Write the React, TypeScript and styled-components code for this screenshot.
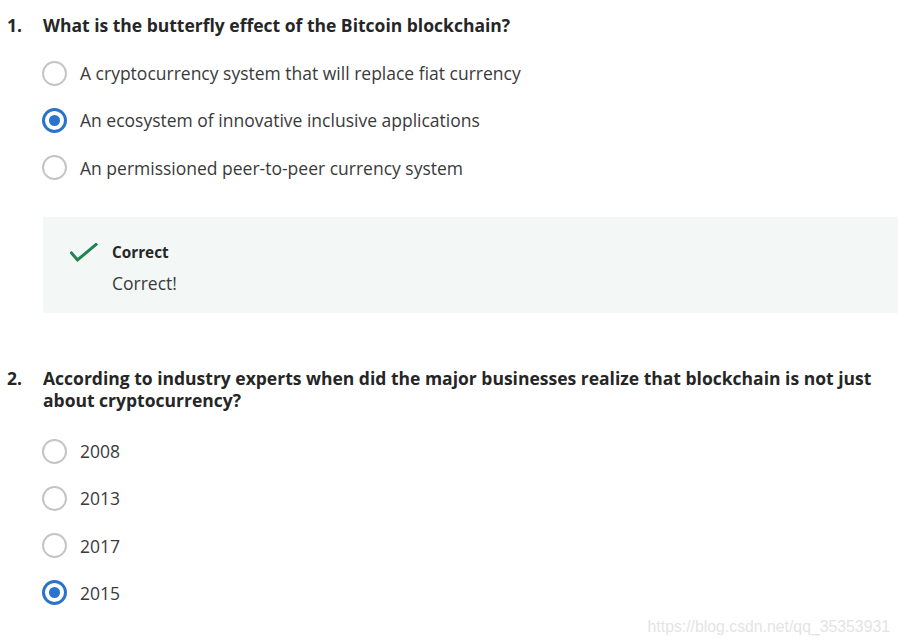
import styled, { createGlobalStyle } from 'styled-components';

const GlobalStyle = createGlobalStyle`
  body {
    margin: 0;
    background: #ffffff;
    font-family: 'Open Sans', 'Noto Sans', sans-serif;
    color: #1f1f1f;
  }
`;

const S_Page = styled.main`
  position: relative;
  width: 898px;
  height: 644px;
  overflow: hidden;
  padding: 14px 0 0 7px;
  box-sizing: border-box;
`;

const S_Question = styled.section<{ $gap: number }>`
  margin-bottom: ${(p) => p.$gap}px;
`;

const S_Prompt = styled.div`
  display: flex;
  font-size: 17.5px;
  font-weight: 700;
  line-height: 22px;
  color: #262626;
`;

const S_Number = styled.span`
  flex: 0 0 36px;
`;

const S_PromptText = styled.span`
  flex: 1;
  padding-right: 12px;
`;

const S_Options = styled.div<{ $top: number }>`
  display: flex;
  flex-direction: column;
  margin: ${(p) => p.$top}px 0 0 35px;
`;

const S_Option = styled.label`
  display: flex;
  align-items: center;
  gap: 13px;
  height: 47.3px;
  font-size: 17.5px;
  color: #3a3a3a;
`;

const S_Radio = styled.span<{ $checked?: boolean }>`
  width: 25px;
  height: 25px;
  box-sizing: border-box;
  border-radius: 50%;
  border: ${(p) => (p.$checked ? '3px solid #2a73cc' : '2.5px solid #c4c4c4')};
  display: flex;
  align-items: center;
  justify-content: center;
  background: #fff;

  &::after {
    content: '';
    display: ${(p) => (p.$checked ? 'block' : 'none')};
    width: 11px;
    height: 11px;
    border-radius: 50%;
    background: #2a73cc;
  }
`;

const S_Feedback = styled.div`
  display: flex;
  gap: 14px;
  margin: 26px 0 0 36px;
  padding: 23px 0 17px 27px;
  background: #f3f8f7;
`;

const S_Check = styled.svg`
  width: 28px;
  height: 22px;
  margin-top: 3px;
  flex: 0 0 auto;
`;

const S_FeedbackBody = styled.div`
  display: flex;
  flex-direction: column;
`;

const S_FeedbackTitle = styled.span`
  font-size: 15.3px;
  font-weight: 700;
  line-height: 24px;
  color: #262626;
`;

const S_FeedbackText = styled.span`
  margin-top: 6px;
  font-size: 17.5px;
  line-height: 26px;
  color: #3a3a3a;
`;

const S_Watermark = styled.span`
  position: absolute;
  right: 8px;
  bottom: 8px;
  font-family: 'Liberation Sans', Arial, sans-serif;
  font-size: 15.8px;
  color: #e4e4e4;
`;

const questions = [
  {
    n: '1.',
    text: 'What is the butterfly effect of the Bitcoin blockchain?',
    options: [
      'A cryptocurrency system that will replace fiat currency',
      'An ecosystem of innovative inclusive applications',
      'An permissioned peer-to-peer currency system',
    ],
    checked: 1,
    top: 13.5,
  },
  {
    n: '2.',
    text: 'According to industry experts when did the major businesses realize that blockchain is not just about cryptocurrency?',
    options: ['2008', '2013', '2017', '2015'],
    checked: 3,
    top: 16.5,
  },
];

const App = () => {
  return (
    <>
      <GlobalStyle />
      <S_Page>
        {questions.map((q, qi) => (
          <S_Question key={q.n} $gap={qi === 0 ? 53.5 : 0}>
            <S_Prompt>
              <S_Number>{q.n}</S_Number>
              <S_PromptText>{q.text}</S_PromptText>
            </S_Prompt>
            <S_Options $top={q.top}>
              {q.options.map((o, i) => (
                <S_Option key={o}>
                  <S_Radio $checked={i === q.checked} />
                  {o}
                </S_Option>
              ))}
            </S_Options>
            {qi === 0 && (
              <S_Feedback>
                <S_Check viewBox="0 0 28 22">
                  <polyline
                    points="1.5,10 7.5,17 26,1.5"
                    fill="none"
                    stroke="#1f8354"
                    strokeWidth="3"
                    strokeLinecap="square"
                  />
                </S_Check>
                <S_FeedbackBody>
                  <S_FeedbackTitle>Correct</S_FeedbackTitle>
                  <S_FeedbackText>Correct!</S_FeedbackText>
                </S_FeedbackBody>
              </S_Feedback>
            )}
          </S_Question>
        ))}
        <S_Watermark>https://blog.csdn.net/qq_35353931</S_Watermark>
      </S_Page>
    </>
  );
};

export default App;
